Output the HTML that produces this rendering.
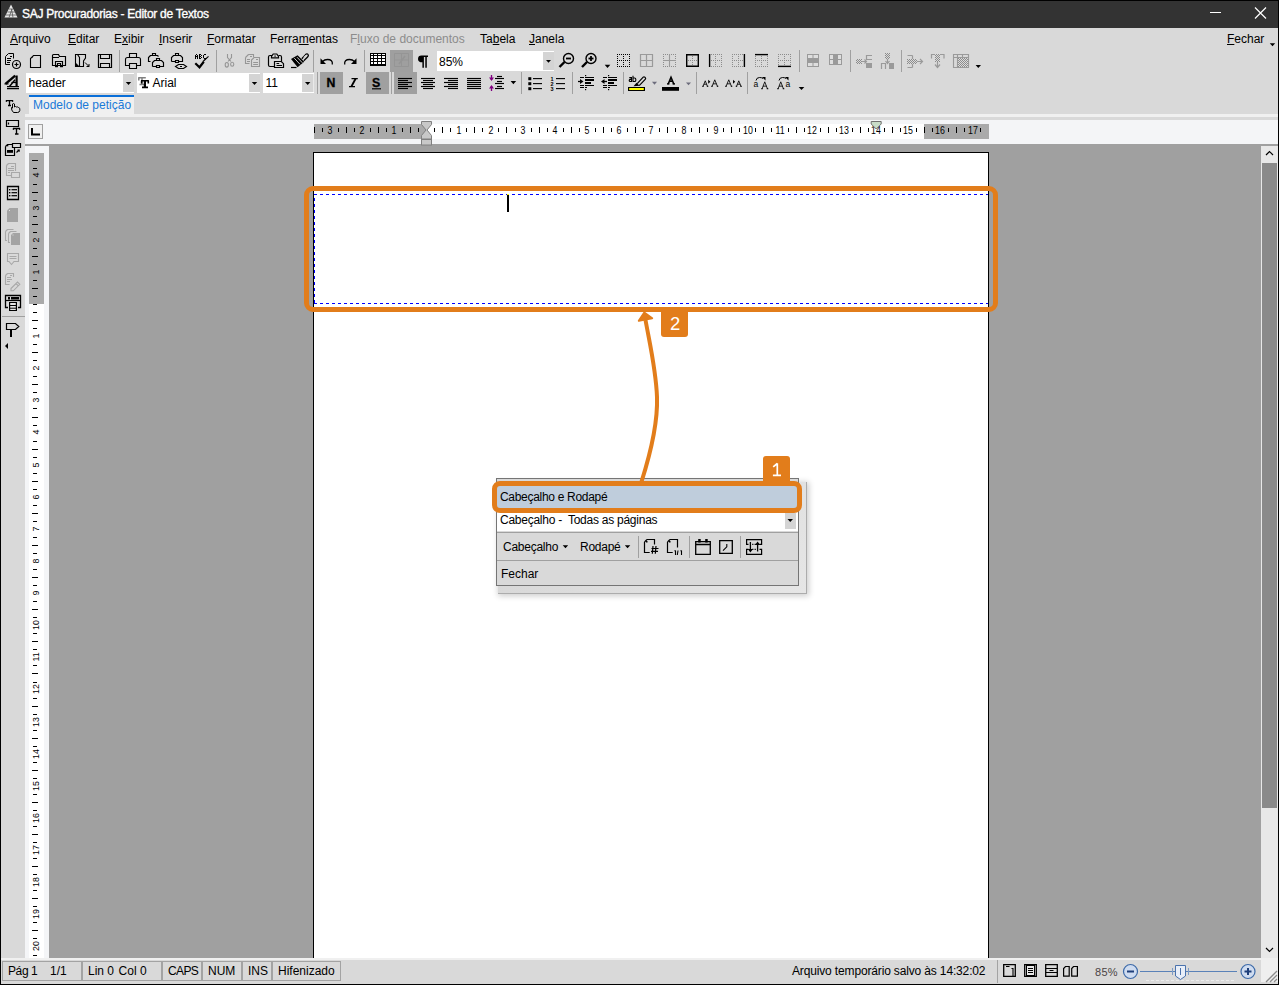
<!DOCTYPE html><html><head><meta charset="utf-8"><style>
*{margin:0;padding:0;box-sizing:border-box}
html,body{width:1279px;height:985px;overflow:hidden;background:#d9d9d9;font-family:"Liberation Sans",sans-serif;font-size:12px;color:#000}
.a{position:absolute}
.t{position:absolute;white-space:nowrap;line-height:1}
u{text-decoration:underline;text-underline-offset:1px;text-decoration-thickness:1px}
svg{position:absolute;overflow:visible}
.rn{position:absolute;font-size:10px;line-height:1;color:#000;white-space:nowrap}
.tk{position:absolute;background:#000}
.pn{position:absolute;top:961px;height:20px;border:1px solid #a3a3a3;background:#d9d9d9}
</style></head><body>

<div class="a" style="left:0;top:0;width:1279px;height:28px;background:#333333;border-top:1px solid #000"></div>
<div class="t" style="left:22px;top:8px;color:#fff;font-size:12px;letter-spacing:-0.27px;-webkit-text-stroke:0.35px #fff">SAJ Procuradorias - Editor de Textos</div>
<div class="a" style="left:1210px;top:12px;width:11px;height:1px;background:#fff"></div>
<svg style="left:0;top:0" width="1279" height="28"><path d="M1255 7.5 L1266 18.5 M1266 7.5 L1255 18.5" stroke="#fff" stroke-width="1.2"/></svg>
<svg style="left:0;top:0" width="30" height="28"><path d="M11 4.5 L17.5 17.5 L4.5 17.5 Z" fill="#e8e8e8"/><path d="M6 15 H17 M7.5 12 H15.5 M9 9 H13 M9 17.5 L12 9 M13 17.5 L11.5 9" stroke="#555" stroke-width="0.8"/></svg>
<div class="t" style="left:10px;top:33px;height:13px"><u>A</u>rquivo</div>
<div class="t" style="left:68px;top:33px;height:13px"><u>E</u>ditar</div>
<div class="t" style="left:114px;top:33px;height:13px">E<u>x</u>ibir</div>
<div class="t" style="left:159px;top:33px;height:13px"><u>I</u>nserir</div>
<div class="t" style="left:207px;top:33px;height:13px"><u>F</u>ormatar</div>
<div class="t" style="left:270px;top:33px;height:13px">Ferra<u>m</u>entas</div>
<div class="t" style="left:350px;top:33px;height:13px"><span style="color:#8c8c8c">F<u>l</u>uxo de documentos</span></div>
<div class="t" style="left:480px;top:33px;height:13px">Ta<u>b</u>ela</div>
<div class="t" style="left:529px;top:33px;height:13px"><u>J</u>anela</div>
<div class="t" style="left:1227px;top:33px;height:13px"><u>F</u>echar</div>
<svg style="left:0;top:0" width="1279" height="60"><path d="M1269.8 43.2 H1275.2 L1272.5 46.2 Z" fill="#000"/></svg>
<div class="a" style="left:25px;top:114px;width:1253px;height:3px;background:#f0f0f0"></div>
<div class="a" style="left:29px;top:95px;width:105px;height:19px;background:#f0f0f0;border-top:2px solid #0a6fd8"></div>
<div class="t" style="left:33px;top:99px;color:#1a7ad8">Modelo de petição</div>
<div class="a" style="left:25px;top:120px;width:1253px;height:24px;background:#f4f5f7"></div>
<div class="a" style="left:28px;top:124px;width:15px;height:15px;background:#f0f0f0;border:1px solid #a0a0a0"></div>
<svg style="left:0;top:0" width="60" height="150"><path d="M32 128 V134.6 H40" stroke="#000" stroke-width="2" fill="none"/></svg>
<div class="a" style="left:25px;top:144px;width:1253px;height:814px;background:#a0a0a0"></div>
<div class="a" style="left:25px;top:146px;width:24px;height:812px;background:#f4f5f7"></div>
<div class="a" style="left:29px;top:153px;width:15px;height:805px;background:#fff"></div>
<div class="a" style="left:29px;top:153px;width:15px;height:151px;background:#aaaaaa"></div>
<div class="a" style="left:314px;top:124px;width:675px;height:15px;background:#fff"></div>
<div class="a" style="left:314px;top:124px;width:112px;height:15px;background:#aaaaaa"></div>
<div class="a" style="left:924px;top:124px;width:65px;height:15px;background:#aaaaaa"></div>
<div class="tk" style="left:314px;top:127px;width:1px;height:6px"></div>
<div class="tk" style="left:322px;top:128px;width:1px;height:4px"></div>
<div class="rn" style="left:300.1px;top:126px;width:60px;text-align:center;transform:scaleX(0.88)">3</div>
<div class="tk" style="left:338px;top:128px;width:1px;height:4px"></div>
<div class="tk" style="left:346px;top:127px;width:1px;height:6px"></div>
<div class="tk" style="left:354px;top:128px;width:1px;height:4px"></div>
<div class="rn" style="left:332.3px;top:126px;width:60px;text-align:center;transform:scaleX(0.88)">2</div>
<div class="tk" style="left:370px;top:128px;width:1px;height:4px"></div>
<div class="tk" style="left:378px;top:127px;width:1px;height:6px"></div>
<div class="tk" style="left:386px;top:128px;width:1px;height:4px"></div>
<div class="rn" style="left:364.4px;top:126px;width:60px;text-align:center;transform:scaleX(0.88)">1</div>
<div class="tk" style="left:402px;top:128px;width:1px;height:4px"></div>
<div class="tk" style="left:410px;top:127px;width:1px;height:6px"></div>
<div class="tk" style="left:418px;top:128px;width:1px;height:4px"></div>
<div class="tk" style="left:434px;top:128px;width:1px;height:4px"></div>
<div class="tk" style="left:442px;top:127px;width:1px;height:6px"></div>
<div class="tk" style="left:450px;top:128px;width:1px;height:4px"></div>
<div class="rn" style="left:428.6px;top:126px;width:60px;text-align:center;transform:scaleX(0.88)">1</div>
<div class="tk" style="left:466px;top:128px;width:1px;height:4px"></div>
<div class="tk" style="left:474px;top:127px;width:1px;height:6px"></div>
<div class="tk" style="left:482px;top:128px;width:1px;height:4px"></div>
<div class="rn" style="left:460.7px;top:126px;width:60px;text-align:center;transform:scaleX(0.88)">2</div>
<div class="tk" style="left:498px;top:128px;width:1px;height:4px"></div>
<div class="tk" style="left:506px;top:127px;width:1px;height:6px"></div>
<div class="tk" style="left:515px;top:128px;width:1px;height:4px"></div>
<div class="rn" style="left:492.9px;top:126px;width:60px;text-align:center;transform:scaleX(0.88)">3</div>
<div class="tk" style="left:531px;top:128px;width:1px;height:4px"></div>
<div class="tk" style="left:539px;top:127px;width:1px;height:6px"></div>
<div class="tk" style="left:547px;top:128px;width:1px;height:4px"></div>
<div class="rn" style="left:525.0px;top:126px;width:60px;text-align:center;transform:scaleX(0.88)">4</div>
<div class="tk" style="left:563px;top:128px;width:1px;height:4px"></div>
<div class="tk" style="left:571px;top:127px;width:1px;height:6px"></div>
<div class="tk" style="left:579px;top:128px;width:1px;height:4px"></div>
<div class="rn" style="left:557.1px;top:126px;width:60px;text-align:center;transform:scaleX(0.88)">5</div>
<div class="tk" style="left:595px;top:128px;width:1px;height:4px"></div>
<div class="tk" style="left:603px;top:127px;width:1px;height:6px"></div>
<div class="tk" style="left:611px;top:128px;width:1px;height:4px"></div>
<div class="rn" style="left:589.2px;top:126px;width:60px;text-align:center;transform:scaleX(0.88)">6</div>
<div class="tk" style="left:627px;top:128px;width:1px;height:4px"></div>
<div class="tk" style="left:635px;top:127px;width:1px;height:6px"></div>
<div class="tk" style="left:643px;top:128px;width:1px;height:4px"></div>
<div class="rn" style="left:621.3px;top:126px;width:60px;text-align:center;transform:scaleX(0.88)">7</div>
<div class="tk" style="left:659px;top:128px;width:1px;height:4px"></div>
<div class="tk" style="left:667px;top:127px;width:1px;height:6px"></div>
<div class="tk" style="left:675px;top:128px;width:1px;height:4px"></div>
<div class="rn" style="left:653.5px;top:126px;width:60px;text-align:center;transform:scaleX(0.88)">8</div>
<div class="tk" style="left:691px;top:128px;width:1px;height:4px"></div>
<div class="tk" style="left:699px;top:127px;width:1px;height:6px"></div>
<div class="tk" style="left:707px;top:128px;width:1px;height:4px"></div>
<div class="rn" style="left:685.6px;top:126px;width:60px;text-align:center;transform:scaleX(0.88)">9</div>
<div class="tk" style="left:723px;top:128px;width:1px;height:4px"></div>
<div class="tk" style="left:731px;top:127px;width:1px;height:6px"></div>
<div class="tk" style="left:739px;top:128px;width:1px;height:4px"></div>
<div class="rn" style="left:717.7px;top:126px;width:60px;text-align:center;transform:scaleX(0.88)">10</div>
<div class="tk" style="left:755px;top:128px;width:1px;height:4px"></div>
<div class="tk" style="left:763px;top:127px;width:1px;height:6px"></div>
<div class="tk" style="left:771px;top:128px;width:1px;height:4px"></div>
<div class="rn" style="left:749.8px;top:126px;width:60px;text-align:center;transform:scaleX(0.88)">11</div>
<div class="tk" style="left:788px;top:128px;width:1px;height:4px"></div>
<div class="tk" style="left:796px;top:127px;width:1px;height:6px"></div>
<div class="tk" style="left:804px;top:128px;width:1px;height:4px"></div>
<div class="rn" style="left:781.9px;top:126px;width:60px;text-align:center;transform:scaleX(0.88)">12</div>
<div class="tk" style="left:820px;top:128px;width:1px;height:4px"></div>
<div class="tk" style="left:828px;top:127px;width:1px;height:6px"></div>
<div class="tk" style="left:836px;top:128px;width:1px;height:4px"></div>
<div class="rn" style="left:814.1px;top:126px;width:60px;text-align:center;transform:scaleX(0.88)">13</div>
<div class="tk" style="left:852px;top:128px;width:1px;height:4px"></div>
<div class="tk" style="left:860px;top:127px;width:1px;height:6px"></div>
<div class="tk" style="left:868px;top:128px;width:1px;height:4px"></div>
<div class="rn" style="left:846.2px;top:126px;width:60px;text-align:center;transform:scaleX(0.88)">14</div>
<div class="tk" style="left:884px;top:128px;width:1px;height:4px"></div>
<div class="tk" style="left:892px;top:127px;width:1px;height:6px"></div>
<div class="tk" style="left:900px;top:128px;width:1px;height:4px"></div>
<div class="rn" style="left:878.3px;top:126px;width:60px;text-align:center;transform:scaleX(0.88)">15</div>
<div class="tk" style="left:916px;top:128px;width:1px;height:4px"></div>
<div class="tk" style="left:924px;top:127px;width:1px;height:6px"></div>
<div class="tk" style="left:932px;top:128px;width:1px;height:4px"></div>
<div class="rn" style="left:910.4px;top:126px;width:60px;text-align:center;transform:scaleX(0.88)">16</div>
<div class="tk" style="left:948px;top:128px;width:1px;height:4px"></div>
<div class="tk" style="left:956px;top:127px;width:1px;height:6px"></div>
<div class="tk" style="left:964px;top:128px;width:1px;height:4px"></div>
<div class="rn" style="left:942.5px;top:126px;width:60px;text-align:center;transform:scaleX(0.88)">17</div>
<div class="tk" style="left:980px;top:128px;width:1px;height:4px"></div>
<svg style="left:0;top:0" width="1279" height="150"><path d="M421.5 121.5 H431.5 V124.5 L427 130 L431.5 135.5 V139 H421.5 V135.5 L426 130 L421.5 124.5 Z" fill="#c8c8c8" stroke="#808080" stroke-width="1"/><rect x="421.5" y="139.5" width="10" height="5.5" fill="#c8c8c8" stroke="#808080"/></svg>
<svg style="left:0;top:0" width="1279" height="150"><path d="M871.2 121.5 H881.2 V124 L876.2 129 L871.2 124 Z" fill="#c8dcc8" stroke="#707070" stroke-width="1"/></svg>
<div class="tk" style="left:32px;top:160px;width:6px;height:1px"></div>
<div class="tk" style="left:33px;top:168px;width:4px;height:1px"></div>
<div class="rn" style="left:5.5px;top:170.4px;width:60px;text-align:center;transform:rotate(-90deg) scale(0.88,0.9)">4</div>
<div class="tk" style="left:33px;top:184px;width:4px;height:1px"></div>
<div class="tk" style="left:32px;top:192px;width:6px;height:1px"></div>
<div class="tk" style="left:33px;top:200px;width:4px;height:1px"></div>
<div class="rn" style="left:5.5px;top:202.5px;width:60px;text-align:center;transform:rotate(-90deg) scale(0.88,0.9)">3</div>
<div class="tk" style="left:33px;top:216px;width:4px;height:1px"></div>
<div class="tk" style="left:32px;top:224px;width:6px;height:1px"></div>
<div class="tk" style="left:33px;top:232px;width:4px;height:1px"></div>
<div class="rn" style="left:5.5px;top:234.7px;width:60px;text-align:center;transform:rotate(-90deg) scale(0.88,0.9)">2</div>
<div class="tk" style="left:33px;top:248px;width:4px;height:1px"></div>
<div class="tk" style="left:32px;top:256px;width:6px;height:1px"></div>
<div class="tk" style="left:33px;top:264px;width:4px;height:1px"></div>
<div class="rn" style="left:5.5px;top:266.8px;width:60px;text-align:center;transform:rotate(-90deg) scale(0.88,0.9)">1</div>
<div class="tk" style="left:33px;top:280px;width:4px;height:1px"></div>
<div class="tk" style="left:32px;top:288px;width:6px;height:1px"></div>
<div class="tk" style="left:33px;top:296px;width:4px;height:1px"></div>
<div class="tk" style="left:33px;top:304px;width:4px;height:1px"></div>
<div class="tk" style="left:33px;top:312px;width:4px;height:1px"></div>
<div class="tk" style="left:32px;top:320px;width:6px;height:1px"></div>
<div class="tk" style="left:33px;top:328px;width:4px;height:1px"></div>
<div class="rn" style="left:5.5px;top:331.0px;width:60px;text-align:center;transform:rotate(-90deg) scale(0.88,0.9)">1</div>
<div class="tk" style="left:33px;top:344px;width:4px;height:1px"></div>
<div class="tk" style="left:32px;top:352px;width:6px;height:1px"></div>
<div class="tk" style="left:33px;top:360px;width:4px;height:1px"></div>
<div class="rn" style="left:5.5px;top:363.1px;width:60px;text-align:center;transform:rotate(-90deg) scale(0.88,0.9)">2</div>
<div class="tk" style="left:33px;top:376px;width:4px;height:1px"></div>
<div class="tk" style="left:32px;top:384px;width:6px;height:1px"></div>
<div class="tk" style="left:33px;top:392px;width:4px;height:1px"></div>
<div class="rn" style="left:5.5px;top:395.3px;width:60px;text-align:center;transform:rotate(-90deg) scale(0.88,0.9)">3</div>
<div class="tk" style="left:33px;top:408px;width:4px;height:1px"></div>
<div class="tk" style="left:32px;top:417px;width:6px;height:1px"></div>
<div class="tk" style="left:33px;top:425px;width:4px;height:1px"></div>
<div class="rn" style="left:5.5px;top:427.4px;width:60px;text-align:center;transform:rotate(-90deg) scale(0.88,0.9)">4</div>
<div class="tk" style="left:33px;top:441px;width:4px;height:1px"></div>
<div class="tk" style="left:32px;top:449px;width:6px;height:1px"></div>
<div class="tk" style="left:33px;top:457px;width:4px;height:1px"></div>
<div class="rn" style="left:5.5px;top:459.5px;width:60px;text-align:center;transform:rotate(-90deg) scale(0.88,0.9)">5</div>
<div class="tk" style="left:33px;top:473px;width:4px;height:1px"></div>
<div class="tk" style="left:32px;top:481px;width:6px;height:1px"></div>
<div class="tk" style="left:33px;top:489px;width:4px;height:1px"></div>
<div class="rn" style="left:5.5px;top:491.6px;width:60px;text-align:center;transform:rotate(-90deg) scale(0.88,0.9)">6</div>
<div class="tk" style="left:33px;top:505px;width:4px;height:1px"></div>
<div class="tk" style="left:32px;top:513px;width:6px;height:1px"></div>
<div class="tk" style="left:33px;top:521px;width:4px;height:1px"></div>
<div class="rn" style="left:5.5px;top:523.7px;width:60px;text-align:center;transform:rotate(-90deg) scale(0.88,0.9)">7</div>
<div class="tk" style="left:33px;top:537px;width:4px;height:1px"></div>
<div class="tk" style="left:32px;top:545px;width:6px;height:1px"></div>
<div class="tk" style="left:33px;top:553px;width:4px;height:1px"></div>
<div class="rn" style="left:5.5px;top:555.9px;width:60px;text-align:center;transform:rotate(-90deg) scale(0.88,0.9)">8</div>
<div class="tk" style="left:33px;top:569px;width:4px;height:1px"></div>
<div class="tk" style="left:32px;top:577px;width:6px;height:1px"></div>
<div class="tk" style="left:33px;top:585px;width:4px;height:1px"></div>
<div class="rn" style="left:5.5px;top:588.0px;width:60px;text-align:center;transform:rotate(-90deg) scale(0.88,0.9)">9</div>
<div class="tk" style="left:33px;top:601px;width:4px;height:1px"></div>
<div class="tk" style="left:32px;top:609px;width:6px;height:1px"></div>
<div class="tk" style="left:33px;top:617px;width:4px;height:1px"></div>
<div class="rn" style="left:5.5px;top:620.1px;width:60px;text-align:center;transform:rotate(-90deg) scale(0.88,0.9)">10</div>
<div class="tk" style="left:33px;top:633px;width:4px;height:1px"></div>
<div class="tk" style="left:32px;top:641px;width:6px;height:1px"></div>
<div class="tk" style="left:33px;top:649px;width:4px;height:1px"></div>
<div class="rn" style="left:5.5px;top:652.2px;width:60px;text-align:center;transform:rotate(-90deg) scale(0.88,0.9)">11</div>
<div class="tk" style="left:33px;top:665px;width:4px;height:1px"></div>
<div class="tk" style="left:32px;top:673px;width:6px;height:1px"></div>
<div class="tk" style="left:33px;top:682px;width:4px;height:1px"></div>
<div class="rn" style="left:5.5px;top:684.3px;width:60px;text-align:center;transform:rotate(-90deg) scale(0.88,0.9)">12</div>
<div class="tk" style="left:33px;top:698px;width:4px;height:1px"></div>
<div class="tk" style="left:32px;top:706px;width:6px;height:1px"></div>
<div class="tk" style="left:33px;top:714px;width:4px;height:1px"></div>
<div class="rn" style="left:5.5px;top:716.5px;width:60px;text-align:center;transform:rotate(-90deg) scale(0.88,0.9)">13</div>
<div class="tk" style="left:33px;top:730px;width:4px;height:1px"></div>
<div class="tk" style="left:32px;top:738px;width:6px;height:1px"></div>
<div class="tk" style="left:33px;top:746px;width:4px;height:1px"></div>
<div class="rn" style="left:5.5px;top:748.6px;width:60px;text-align:center;transform:rotate(-90deg) scale(0.88,0.9)">14</div>
<div class="tk" style="left:33px;top:762px;width:4px;height:1px"></div>
<div class="tk" style="left:32px;top:770px;width:6px;height:1px"></div>
<div class="tk" style="left:33px;top:778px;width:4px;height:1px"></div>
<div class="rn" style="left:5.5px;top:780.7px;width:60px;text-align:center;transform:rotate(-90deg) scale(0.88,0.9)">15</div>
<div class="tk" style="left:33px;top:794px;width:4px;height:1px"></div>
<div class="tk" style="left:32px;top:802px;width:6px;height:1px"></div>
<div class="tk" style="left:33px;top:810px;width:4px;height:1px"></div>
<div class="rn" style="left:5.5px;top:812.8px;width:60px;text-align:center;transform:rotate(-90deg) scale(0.88,0.9)">16</div>
<div class="tk" style="left:33px;top:826px;width:4px;height:1px"></div>
<div class="tk" style="left:32px;top:834px;width:6px;height:1px"></div>
<div class="tk" style="left:33px;top:842px;width:4px;height:1px"></div>
<div class="rn" style="left:5.5px;top:844.9px;width:60px;text-align:center;transform:rotate(-90deg) scale(0.88,0.9)">17</div>
<div class="tk" style="left:33px;top:858px;width:4px;height:1px"></div>
<div class="tk" style="left:32px;top:866px;width:6px;height:1px"></div>
<div class="tk" style="left:33px;top:874px;width:4px;height:1px"></div>
<div class="rn" style="left:5.5px;top:877.1px;width:60px;text-align:center;transform:rotate(-90deg) scale(0.88,0.9)">18</div>
<div class="tk" style="left:33px;top:890px;width:4px;height:1px"></div>
<div class="tk" style="left:32px;top:898px;width:6px;height:1px"></div>
<div class="tk" style="left:33px;top:906px;width:4px;height:1px"></div>
<div class="rn" style="left:5.5px;top:909.2px;width:60px;text-align:center;transform:rotate(-90deg) scale(0.88,0.9)">19</div>
<div class="tk" style="left:33px;top:922px;width:4px;height:1px"></div>
<div class="tk" style="left:32px;top:930px;width:6px;height:1px"></div>
<div class="tk" style="left:33px;top:938px;width:4px;height:1px"></div>
<div class="rn" style="left:5.5px;top:941.3px;width:60px;text-align:center;transform:rotate(-90deg) scale(0.88,0.9)">20</div>
<div class="tk" style="left:33px;top:955px;width:4px;height:1px"></div>
<div class="a" style="left:313px;top:152px;width:676px;height:806px;background:#fff;border:1px solid #000;border-bottom:none"></div>
<svg style="left:0;top:0" width="1279" height="985"><path d="M314 194.5 H988 M314 303.5 H988" stroke="#0000ff" stroke-width="1" stroke-dasharray="3 3"/><path d="M314.5 194 V304" stroke="#0000ff" stroke-width="1" stroke-dasharray="3 3" stroke-dashoffset="2"/></svg>
<div class="a" style="left:507px;top:195px;width:2px;height:17px;background:#000"></div>
<div class="a" style="left:507px;top:194px;width:2px;height:1px;background:#ffff00"></div>
<div class="a" style="left:1261px;top:146px;width:17px;height:812px;background:#e8e8e8"></div>
<div class="a" style="left:1262px;top:163px;width:15px;height:645px;background:#8a8a8a"></div>
<svg style="left:0;top:0" width="1279" height="985"><path d="M1266 155 L1269.5 151.5 L1273 155" stroke="#000" stroke-width="1.2" fill="none"/><path d="M1266 948 L1269.5 951.5 L1273 948" stroke="#000" stroke-width="1.2" fill="none"/></svg>
<div class="a" style="left:0;top:958px;width:1279px;height:2px;background:#f0f0f0"></div>
<div class="pn" style="left:2px;width:80px"><div class="t" style="left:5px;top:3px;letter-spacing:-0.4px">Pág 1</div></div>
<div class="pn" style="left:82px;width:80px"><div class="t" style="left:5px;top:3px;">Lin 0 <span style="margin-left:1.2px">Col 0</span></div></div>
<div class="pn" style="left:162px;width:40px"><div class="t" style="left:5px;top:3px;letter-spacing:-0.6px">CAPS</div></div>
<div class="pn" style="left:202px;width:40px"><div class="t" style="left:5px;top:3px;">NUM</div></div>
<div class="pn" style="left:242px;width:30px"><div class="t" style="left:5px;top:3px;">INS</div></div>
<div class="pn" style="left:272px;width:69px"><div class="t" style="left:5px;top:3px;">Hifenizado</div></div>
<div class="t" style="left:50px;top:965px">1/1</div>
<div class="t" style="left:792px;top:965px;letter-spacing:-0.15px">Arquivo temporário salvo às 14:32:02</div>
<div class="a" style="left:997px;top:960px;width:1px;height:23px;background:#a3a3a3"></div>
<div class="t" style="left:1095px;top:967px;color:#4a4444;font-size:11px;letter-spacing:0.3px">85%</div>
<svg style="left:0;top:0" width="1279" height="985"><path d="M1140 971.5 H1237" stroke="#5a82b8" stroke-width="1"/><circle cx="1130.5" cy="971.5" r="7" fill="#cfdcf0" stroke="#3d6aa8" stroke-width="1.2"/><path d="M1127 971.5 H1134" stroke="#1e3f7a" stroke-width="2"/><circle cx="1248" cy="971.5" r="7" fill="#cfdcf0" stroke="#3d6aa8" stroke-width="1.2"/><path d="M1244.5 971.5 H1251.5 M1248 968 V975" stroke="#1e3f7a" stroke-width="2"/><path d="M1175.5 965.5 H1185.5 V976 L1180.5 979.5 L1175.5 976 Z" fill="#e8eef8" stroke="#4a72ad" stroke-width="1"/><path d="M1180.5 968 V975" stroke="#4a72ad"/><path d="M1172.5 968 V975 M1188.5 968 V975" stroke="#7f9cc6" stroke-width="1"/><path d="M1146 980.5 H1234" stroke="#ececec" stroke-width="1" stroke-dasharray="3 2"/><path d="M1003.7 964.7 H1015.3 V976.3 H1003.7 Z" stroke="#000" stroke-width="1.3" fill="none"/><path d="M1006 966.5 H1009.5 M1011.5 968.5 H1013 V976" stroke="#000" stroke-width="1.1" fill="none"/><path d="M1024.7 964.7 H1036.3 V976.3 H1024.7 Z" stroke="#000" stroke-width="1.3" fill="none"/><rect x="1026" y="965" width="9" height="11" fill="#000"/><rect x="1027" y="966" width="7" height="9" fill="#e8e8e8"/><path d="M1028 968.5 H1033 M1028 970.5 H1033 M1028 972.5 H1033" stroke="#000" stroke-width="1"/><path d="M1045.7 964.7 H1057.3 V976.3 H1045.7 Z" stroke="#000" stroke-width="1.3" fill="none"/><path d="M1046 968.5 H1057 M1046 972.5 H1057" stroke="#000" stroke-width="1.2"/><path d="M1049.5 970.5 H1053.5" stroke="#000" stroke-width="1"/><path d="M1065.5 966.5 H1069.2 V976.2 H1063.6 V968.5 Z M1073.5 966.5 H1077.4 V976.2 H1071.7 V968.5 Z" stroke="#000" stroke-width="1.2" fill="none"/></svg>
<div class="a" style="left:1261px;top:958px;width:17px;height:24px;background:#efefef"></div>
<svg style="left:0;top:0" width="1279" height="985"><path d="M1266 982 L1277 971 M1270 982 L1277 975 M1274 982 L1277 979" stroke="#8c8c8c" stroke-width="1.3"/></svg>
<svg style="left:0;top:0" width="1279" height="360" shape-rendering="auto"><defs><pattern id="chk" width="2" height="2" patternUnits="userSpaceOnUse"><rect width="2" height="2" fill="#dadada"/><rect width="1" height="1" fill="#8c8c8c"/><rect x="1" y="1" width="1" height="1" fill="#8c8c8c"/></pattern></defs><path d="M8.5 53.5 H13.5 V58.5 M5.5 56.5 L8.5 53.5 M5.5 56.5 V64.5 H10" stroke="#000" stroke-width="1" fill="none" /><path d="M7 58.5 H11 M7 60.5 H11 M7 62.5 H10 M10 56.5 H12" stroke="#000" stroke-width="1" fill="none" /><circle cx="16.5" cy="64.5" r="4" stroke="#000" stroke-width="1.2" fill="#d9d9d9"/><path d="M14.5 64.5 H18.5 M16.5 62.5 V66.5" stroke="#000" stroke-width="1.2" fill="none" /><path d="M33.5 55.5 H40.5 V67.5 H30.5 V58.5 Z" stroke="#000" stroke-width="1.1" fill="none" /><rect x="31.5" y="57" width="1" height="1" fill="#000"/><path d="M52.5 65.5 V55.5 Q52.5 54.5 53.5 54.5 H58.5 L59.5 56.5 H65.5 V65.5 Z M52.5 57.5 H59" stroke="#000" stroke-width="1.15" fill="none" /><path d="M55.5 66.5 V61.5 H62.5 V66.5 M57.5 66 V63.5 H60.5 V66" stroke="#000" stroke-width="1.15" fill="none" /><rect x="55" y="66" width="3" height="1.2" fill="#000"/><rect x="60" y="66" width="3" height="1.2" fill="#000"/><path d="M75.5 54.5 H85.5 V58 L83.5 61 V66.5 H75.5 Z M77.5 54.5 L79.5 57.5 V66.5" stroke="#000" stroke-width="1.1" fill="none" /><path d="M76 63 L79 66 H76 Z" fill="#000"/><path d="M85 62.5 L89 66.5 M89 64 V66.5 H86.5" stroke="#000" stroke-width="1" fill="none" /><path d="M98.5 54.5 H111.5 V67.5 H98.5 Z" stroke="#000" stroke-width="1.2" fill="none" /><path d="M100.5 55 V58.5 H109.5 V55 M100.5 67 V63.5 H109.5 V67" stroke="#000" stroke-width="1.1" fill="none" /><rect x="119" y="50" width="1" height="22" fill="#a0a0a0"/><path d="M129.5 57.5 V53.5 H136.5 V57.5" stroke="#000" stroke-width="1.1" fill="none" /><path d="M129.5 65.5 H125.5 V59.5 Q125.5 57.5 127.5 57.5 H138.5 Q140.5 57.5 140.5 59.5 V65.5 H136.5" stroke="#000" stroke-width="1.1" fill="none" /><path d="M129.5 63.5 H136.5 V68.5 H129.5 Z" stroke="#000" stroke-width="1.1" fill="none" /><path d="M152.5 55.5 V53.5 H155.5 V55.5" stroke="#000" stroke-width="1.15" fill="none" /><path d="M150.5 55.5 H157.5 L158.5 56.5 M150.5 55.5 L148.5 57.5 V61.5 H150.5" stroke="#000" stroke-width="1.15" fill="none" /><path d="M156.5 60.5 V58.5 H159.5 V60.5" stroke="#000" stroke-width="1.15" fill="none" /><path d="M152.5 66.5 V62.5 L154.5 60.5 H161.5 L163.5 62.5 V66.5 H160 M152.5 66.5 H156" stroke="#000" stroke-width="1.15" fill="none" /><path d="M156.5 67.5 V65.5 H159.5 V67.5 Z" stroke="#000" stroke-width="1.15" fill="none" /><path d="M175.5 55.5 V53.5 H178.5 V55.5" stroke="#000" stroke-width="1.15" fill="none" /><path d="M171.5 61.5 V57.5 L173.5 55.5 H180.5 L182.5 57.5 V61.5 H179 M171.5 61.5 H175" stroke="#000" stroke-width="1.15" fill="none" /><path d="M175.5 62.5 V60.5 H178.5 V62.5 Z" stroke="#000" stroke-width="1.15" fill="none" /><path d="M178.5 64.5 H183.5 L186.5 66.5 L183.5 68.5 H178.5 L175.5 66.5 Z" stroke="#000" stroke-width="1.15" fill="none" /><rect x="180" y="66" width="2" height="1" fill="#000"/><rect x="196" y="54" width="1" height="1" fill="#000"/><rect x="195" y="55" width="1" height="4" fill="#000"/><rect x="197" y="55" width="1" height="4" fill="#000"/><rect x="195" y="56" width="3" height="1" fill="#000"/><rect x="199" y="54" width="2" height="1" fill="#000"/><rect x="199" y="54" width="1" height="5" fill="#000"/><rect x="201" y="55" width="1" height="1" fill="#000"/><rect x="199" y="56" width="2" height="1" fill="#000"/><rect x="201" y="57" width="1" height="1" fill="#000"/><rect x="199" y="58" width="2" height="1" fill="#000"/><rect x="204" y="54" width="2" height="1" fill="#000"/><rect x="203" y="55" width="1" height="3" fill="#000"/><rect x="204" y="58" width="1" height="1" fill="#000"/><path d="M195.3 63.3 L199.5 67.3 L203.8 61.8" stroke="#000" stroke-width="2.2" fill="none" /><path d="M203 61.5 L208.5 56.3" stroke="#000" stroke-width="1.1" fill="none" /><path d="M203.5 58 L207 58 L205 60 Z" fill="#000"/><rect x="216" y="50" width="1" height="22" fill="#a0a0a0"/><path d="M227.5 54 V57.5 L231 61.5 M231.5 54 V57.5 L228 61.5" stroke="#969696" stroke-width="1.1" fill="none" /><ellipse cx="226.8" cy="64.8" rx="1.6" ry="2.3" stroke="#969696" stroke-width="1.1" fill="none"/><ellipse cx="232.2" cy="64.3" rx="1.6" ry="2" stroke="#969696" stroke-width="1.1" fill="none"/><path d="M248.5 54.5 H253.5 V57 M245.5 57.5 L248.5 54.5 M245.5 57.5 V63.5 H249.5" stroke="#969696" stroke-width="1.1" fill="none" /><path d="M247 59.5 H250 M247 61.5 H250 M250 56.5 H252" stroke="#969696" stroke-width="1" fill="none" /><path d="M254 57.5 H259.5 V66.5 H251.5 V60 Z" stroke="#969696" stroke-width="1.1" fill="none" /><path d="M253.2 62.5 H258 M253.2 64.5 H258 M256 59.5 H258" stroke="#969696" stroke-width="1" fill="none" /><path d="M272 55.5 H270 Q268.5 55.5 268.5 57 V65 Q268.5 66.5 270 66.5 H274.5" stroke="#000" stroke-width="1.2" fill="none" /><path d="M278.5 55.5 H280 Q281.5 55.5 281.5 57 V61.5" stroke="#000" stroke-width="1.2" fill="none" /><path d="M271.5 57.8 H278.5 V56.5 L276.8 54 H273.2 L271.5 56.5 Z" stroke="#000" stroke-width="1.2" fill="none" /><rect x="274.3" y="55.6" width="1.6" height="1" fill="#000"/><path d="M274.5 61.5 H281.3 L283.5 63.7 V67.5 H274.5 Z" stroke="#000" stroke-width="1.2" fill="none" /><path d="M276.5 63.5 H279.2 M276.5 65.5 H282" stroke="#000" stroke-width="1.1" fill="none" /><path d="M291 59 L297.6 55.2 L304.2 61.8 L297.6 67.2 Z" fill="#000"/><path d="M294.3 58.2 L300 64.3 M297 57.2 L302.4 62.8" stroke="#e8e8e8" stroke-width="0.9" fill="none" /><path d="M301.8 58.8 L305.6 54.6 Q307 53.3 308 54.4 Q309 55.6 307.6 57 L303.8 60.8" stroke="#000" stroke-width="1.3" fill="none" /><path d="M303.5 57.3 L306.3 54.9" stroke="#e8e8e8" stroke-width="0.8" fill="none" /><path d="M291 67.5 H296.5" stroke="#000" stroke-width="1.2" fill="none" /><rect x="313" y="50" width="1" height="22" fill="#a0a0a0"/><path d="M332.3 64.5 Q333 59.5 327.5 59.5 Q324.5 59.5 322.5 61.5" stroke="#000" stroke-width="1.3" fill="none" /><path d="M320.5 58.3 V64 H326 Z" fill="#000"/><path d="M344.7 64.5 Q344 59.5 349.5 59.5 Q352.5 59.5 354.5 61.5" stroke="#000" stroke-width="1.3" fill="none" /><path d="M356.5 58.3 V64 H351 Z" fill="#000"/><rect x="364" y="50" width="1" height="22" fill="#a0a0a0"/><rect x="370" y="53" width="16" height="13" fill="#000"/><rect x="371" y="54" width="2" height="1" fill="#fff"/><rect x="371" y="56" width="2" height="2" fill="#fff"/><rect x="371" y="59" width="2" height="2" fill="#fff"/><rect x="371" y="62" width="2" height="2" fill="#fff"/><rect x="374" y="54" width="3" height="1" fill="#fff"/><rect x="374" y="56" width="3" height="2" fill="#fff"/><rect x="374" y="59" width="3" height="2" fill="#fff"/><rect x="374" y="62" width="3" height="2" fill="#fff"/><rect x="378" y="54" width="3" height="1" fill="#fff"/><rect x="378" y="56" width="3" height="2" fill="#fff"/><rect x="378" y="59" width="3" height="2" fill="#fff"/><rect x="378" y="62" width="3" height="2" fill="#fff"/><rect x="382" y="54" width="3" height="1" fill="#fff"/><rect x="382" y="56" width="3" height="2" fill="#fff"/><rect x="382" y="59" width="3" height="2" fill="#fff"/><rect x="382" y="62" width="3" height="2" fill="#fff"/><rect x="390" y="50" width="23" height="22" fill="#9f9f9f"/><path d="M394.5 53.5 H408.5 V66.5 H394.5 Z M401.5 53.5 V66.5 M394.5 60 H408.5" stroke="#959595" stroke-width="1" fill="none" /><path d="M399 64 L405 56" stroke="#959595" stroke-width="1.5" fill="none" /><path d="M421.5 55.5 H428 V57 H426.8 V67.8 H425.3 V57 H423.9 V67.8 H422.4 V62.3 Q418 62.3 418 58.9 Q418 55.5 421.5 55.5 Z" fill="#000"/><rect x="437" y="51" width="117" height="20" fill="#fff"/><rect x="543" y="52" width="11" height="18" fill="#d4d4d4"/><path d="M546 60 H551 L548.5 62.8 Z" fill="#000"/><text x="439" y="65.5" font-family="Liberation Sans" font-size="12" font-weight="normal" font-style="normal" fill="#000">85%</text><circle cx="568.5" cy="58.5" r="5" stroke="#000" stroke-width="1.4" fill="none"/><path d="M566.0 58.5 H571.0" stroke="#000" stroke-width="1.8" fill="none" /><path d="M559.5 67 L564.5 62" stroke="#000" stroke-width="2.4" fill="none" /><circle cx="591" cy="58.5" r="5" stroke="#000" stroke-width="1.4" fill="none"/><path d="M588.5 58.5 H593.5" stroke="#000" stroke-width="1.8" fill="none" /><path d="M591 56 V61" stroke="#000" stroke-width="1.8" fill="none" /><path d="M582 67 L587 62" stroke="#000" stroke-width="2.4" fill="none" /><path d="M604.7 64.8 H610.3 L607.5 68 Z" fill="#000"/><rect x="617" y="54" width="1" height="1" fill="#000"/><rect x="617" y="56" width="1" height="1" fill="#000"/><rect x="617" y="58" width="1" height="1" fill="#000"/><rect x="617" y="60" width="1" height="1" fill="#000"/><rect x="617" y="62" width="1" height="1" fill="#000"/><rect x="617" y="64" width="1" height="1" fill="#000"/><rect x="617" y="66" width="1" height="1" fill="#000"/><rect x="619" y="54" width="1" height="1" fill="#000"/><rect x="619" y="60" width="1" height="1" fill="#000"/><rect x="619" y="66" width="1" height="1" fill="#000"/><rect x="621" y="54" width="1" height="1" fill="#000"/><rect x="621" y="60" width="1" height="1" fill="#000"/><rect x="621" y="66" width="1" height="1" fill="#000"/><rect x="623" y="54" width="1" height="1" fill="#000"/><rect x="623" y="56" width="1" height="1" fill="#000"/><rect x="623" y="58" width="1" height="1" fill="#000"/><rect x="623" y="60" width="1" height="1" fill="#000"/><rect x="623" y="62" width="1" height="1" fill="#000"/><rect x="623" y="64" width="1" height="1" fill="#000"/><rect x="623" y="66" width="1" height="1" fill="#000"/><rect x="625" y="54" width="1" height="1" fill="#000"/><rect x="625" y="60" width="1" height="1" fill="#000"/><rect x="625" y="66" width="1" height="1" fill="#000"/><rect x="627" y="54" width="1" height="1" fill="#000"/><rect x="627" y="60" width="1" height="1" fill="#000"/><rect x="627" y="66" width="1" height="1" fill="#000"/><rect x="629" y="54" width="1" height="1" fill="#000"/><rect x="629" y="56" width="1" height="1" fill="#000"/><rect x="629" y="58" width="1" height="1" fill="#000"/><rect x="629" y="60" width="1" height="1" fill="#000"/><rect x="629" y="62" width="1" height="1" fill="#000"/><rect x="629" y="64" width="1" height="1" fill="#000"/><rect x="629" y="66" width="1" height="1" fill="#000"/><path d="M640.5 54.5 H652.5 V66.5 H640.5 Z M646.5 54.5 V66.5 M640.5 60.5 H652.5" stroke="#9a9a9a" stroke-width="1.2" fill="none" /><rect x="663" y="54" width="1" height="1" fill="#8c8c8c"/><rect x="663" y="56" width="1" height="1" fill="#8c8c8c"/><rect x="663" y="58" width="1" height="1" fill="#8c8c8c"/><rect x="663" y="60" width="1" height="1" fill="#8c8c8c"/><rect x="663" y="62" width="1" height="1" fill="#8c8c8c"/><rect x="663" y="64" width="1" height="1" fill="#8c8c8c"/><rect x="663" y="66" width="1" height="1" fill="#8c8c8c"/><rect x="665" y="54" width="1" height="1" fill="#8c8c8c"/><rect x="665" y="66" width="1" height="1" fill="#8c8c8c"/><rect x="667" y="54" width="1" height="1" fill="#8c8c8c"/><rect x="667" y="66" width="1" height="1" fill="#8c8c8c"/><rect x="669" y="54" width="1" height="1" fill="#8c8c8c"/><rect x="669" y="66" width="1" height="1" fill="#8c8c8c"/><rect x="671" y="54" width="1" height="1" fill="#8c8c8c"/><rect x="671" y="66" width="1" height="1" fill="#8c8c8c"/><rect x="673" y="54" width="1" height="1" fill="#8c8c8c"/><rect x="673" y="66" width="1" height="1" fill="#8c8c8c"/><rect x="675" y="54" width="1" height="1" fill="#8c8c8c"/><rect x="675" y="56" width="1" height="1" fill="#8c8c8c"/><rect x="675" y="58" width="1" height="1" fill="#8c8c8c"/><rect x="675" y="60" width="1" height="1" fill="#8c8c8c"/><rect x="675" y="62" width="1" height="1" fill="#8c8c8c"/><rect x="675" y="64" width="1" height="1" fill="#8c8c8c"/><rect x="675" y="66" width="1" height="1" fill="#8c8c8c"/><path d="M669.5 54 V67 M663 60.5 H676" stroke="#9a9a9a" stroke-width="1.1" fill="none" /><rect x="686" y="60" width="1" height="1" fill="#8c8c8c"/><rect x="688" y="60" width="1" height="1" fill="#8c8c8c"/><rect x="690" y="60" width="1" height="1" fill="#8c8c8c"/><rect x="692" y="54" width="1" height="1" fill="#8c8c8c"/><rect x="692" y="56" width="1" height="1" fill="#8c8c8c"/><rect x="692" y="58" width="1" height="1" fill="#8c8c8c"/><rect x="692" y="60" width="1" height="1" fill="#8c8c8c"/><rect x="692" y="62" width="1" height="1" fill="#8c8c8c"/><rect x="692" y="64" width="1" height="1" fill="#8c8c8c"/><rect x="692" y="66" width="1" height="1" fill="#8c8c8c"/><rect x="694" y="60" width="1" height="1" fill="#8c8c8c"/><rect x="696" y="60" width="1" height="1" fill="#8c8c8c"/><rect x="698" y="60" width="1" height="1" fill="#8c8c8c"/><path d="M686.7 54.7 H698.3 V66.3 H686.7 Z" stroke="#000" stroke-width="1.4" fill="none" /><rect x="709" y="54" width="1" height="1" fill="#8c8c8c"/><rect x="709" y="56" width="1" height="1" fill="#8c8c8c"/><rect x="709" y="58" width="1" height="1" fill="#8c8c8c"/><rect x="709" y="60" width="1" height="1" fill="#8c8c8c"/><rect x="709" y="62" width="1" height="1" fill="#8c8c8c"/><rect x="709" y="64" width="1" height="1" fill="#8c8c8c"/><rect x="709" y="66" width="1" height="1" fill="#8c8c8c"/><rect x="711" y="54" width="1" height="1" fill="#8c8c8c"/><rect x="711" y="60" width="1" height="1" fill="#8c8c8c"/><rect x="711" y="66" width="1" height="1" fill="#8c8c8c"/><rect x="713" y="54" width="1" height="1" fill="#8c8c8c"/><rect x="713" y="60" width="1" height="1" fill="#8c8c8c"/><rect x="713" y="66" width="1" height="1" fill="#8c8c8c"/><rect x="715" y="54" width="1" height="1" fill="#8c8c8c"/><rect x="715" y="56" width="1" height="1" fill="#8c8c8c"/><rect x="715" y="58" width="1" height="1" fill="#8c8c8c"/><rect x="715" y="60" width="1" height="1" fill="#8c8c8c"/><rect x="715" y="62" width="1" height="1" fill="#8c8c8c"/><rect x="715" y="64" width="1" height="1" fill="#8c8c8c"/><rect x="715" y="66" width="1" height="1" fill="#8c8c8c"/><rect x="717" y="54" width="1" height="1" fill="#8c8c8c"/><rect x="717" y="60" width="1" height="1" fill="#8c8c8c"/><rect x="717" y="66" width="1" height="1" fill="#8c8c8c"/><rect x="719" y="54" width="1" height="1" fill="#8c8c8c"/><rect x="719" y="60" width="1" height="1" fill="#8c8c8c"/><rect x="719" y="66" width="1" height="1" fill="#8c8c8c"/><rect x="721" y="54" width="1" height="1" fill="#8c8c8c"/><rect x="721" y="56" width="1" height="1" fill="#8c8c8c"/><rect x="721" y="58" width="1" height="1" fill="#8c8c8c"/><rect x="721" y="60" width="1" height="1" fill="#8c8c8c"/><rect x="721" y="62" width="1" height="1" fill="#8c8c8c"/><rect x="721" y="64" width="1" height="1" fill="#8c8c8c"/><rect x="721" y="66" width="1" height="1" fill="#8c8c8c"/><path d="M709.6 54 V67" stroke="#000" stroke-width="1.4" fill="none" /><rect x="732" y="54" width="1" height="1" fill="#8c8c8c"/><rect x="732" y="56" width="1" height="1" fill="#8c8c8c"/><rect x="732" y="58" width="1" height="1" fill="#8c8c8c"/><rect x="732" y="60" width="1" height="1" fill="#8c8c8c"/><rect x="732" y="62" width="1" height="1" fill="#8c8c8c"/><rect x="732" y="64" width="1" height="1" fill="#8c8c8c"/><rect x="732" y="66" width="1" height="1" fill="#8c8c8c"/><rect x="734" y="54" width="1" height="1" fill="#8c8c8c"/><rect x="734" y="60" width="1" height="1" fill="#8c8c8c"/><rect x="734" y="66" width="1" height="1" fill="#8c8c8c"/><rect x="736" y="54" width="1" height="1" fill="#8c8c8c"/><rect x="736" y="60" width="1" height="1" fill="#8c8c8c"/><rect x="736" y="66" width="1" height="1" fill="#8c8c8c"/><rect x="738" y="54" width="1" height="1" fill="#8c8c8c"/><rect x="738" y="56" width="1" height="1" fill="#8c8c8c"/><rect x="738" y="58" width="1" height="1" fill="#8c8c8c"/><rect x="738" y="60" width="1" height="1" fill="#8c8c8c"/><rect x="738" y="62" width="1" height="1" fill="#8c8c8c"/><rect x="738" y="64" width="1" height="1" fill="#8c8c8c"/><rect x="738" y="66" width="1" height="1" fill="#8c8c8c"/><rect x="740" y="54" width="1" height="1" fill="#8c8c8c"/><rect x="740" y="60" width="1" height="1" fill="#8c8c8c"/><rect x="740" y="66" width="1" height="1" fill="#8c8c8c"/><rect x="742" y="54" width="1" height="1" fill="#8c8c8c"/><rect x="742" y="60" width="1" height="1" fill="#8c8c8c"/><rect x="742" y="66" width="1" height="1" fill="#8c8c8c"/><rect x="744" y="54" width="1" height="1" fill="#8c8c8c"/><rect x="744" y="56" width="1" height="1" fill="#8c8c8c"/><rect x="744" y="58" width="1" height="1" fill="#8c8c8c"/><rect x="744" y="60" width="1" height="1" fill="#8c8c8c"/><rect x="744" y="62" width="1" height="1" fill="#8c8c8c"/><rect x="744" y="64" width="1" height="1" fill="#8c8c8c"/><rect x="744" y="66" width="1" height="1" fill="#8c8c8c"/><path d="M744.4 54 V67" stroke="#000" stroke-width="1.4" fill="none" /><rect x="755" y="54" width="1" height="1" fill="#8c8c8c"/><rect x="755" y="56" width="1" height="1" fill="#8c8c8c"/><rect x="755" y="58" width="1" height="1" fill="#8c8c8c"/><rect x="755" y="60" width="1" height="1" fill="#8c8c8c"/><rect x="755" y="62" width="1" height="1" fill="#8c8c8c"/><rect x="755" y="64" width="1" height="1" fill="#8c8c8c"/><rect x="755" y="66" width="1" height="1" fill="#8c8c8c"/><rect x="757" y="54" width="1" height="1" fill="#8c8c8c"/><rect x="757" y="60" width="1" height="1" fill="#8c8c8c"/><rect x="757" y="66" width="1" height="1" fill="#8c8c8c"/><rect x="759" y="54" width="1" height="1" fill="#8c8c8c"/><rect x="759" y="60" width="1" height="1" fill="#8c8c8c"/><rect x="759" y="66" width="1" height="1" fill="#8c8c8c"/><rect x="761" y="54" width="1" height="1" fill="#8c8c8c"/><rect x="761" y="56" width="1" height="1" fill="#8c8c8c"/><rect x="761" y="58" width="1" height="1" fill="#8c8c8c"/><rect x="761" y="60" width="1" height="1" fill="#8c8c8c"/><rect x="761" y="62" width="1" height="1" fill="#8c8c8c"/><rect x="761" y="64" width="1" height="1" fill="#8c8c8c"/><rect x="761" y="66" width="1" height="1" fill="#8c8c8c"/><rect x="763" y="54" width="1" height="1" fill="#8c8c8c"/><rect x="763" y="60" width="1" height="1" fill="#8c8c8c"/><rect x="763" y="66" width="1" height="1" fill="#8c8c8c"/><rect x="765" y="54" width="1" height="1" fill="#8c8c8c"/><rect x="765" y="60" width="1" height="1" fill="#8c8c8c"/><rect x="765" y="66" width="1" height="1" fill="#8c8c8c"/><rect x="767" y="54" width="1" height="1" fill="#8c8c8c"/><rect x="767" y="56" width="1" height="1" fill="#8c8c8c"/><rect x="767" y="58" width="1" height="1" fill="#8c8c8c"/><rect x="767" y="60" width="1" height="1" fill="#8c8c8c"/><rect x="767" y="62" width="1" height="1" fill="#8c8c8c"/><rect x="767" y="64" width="1" height="1" fill="#8c8c8c"/><rect x="767" y="66" width="1" height="1" fill="#8c8c8c"/><path d="M755 54.6 H768" stroke="#000" stroke-width="1.4" fill="none" /><rect x="778" y="54" width="1" height="1" fill="#8c8c8c"/><rect x="778" y="56" width="1" height="1" fill="#8c8c8c"/><rect x="778" y="58" width="1" height="1" fill="#8c8c8c"/><rect x="778" y="60" width="1" height="1" fill="#8c8c8c"/><rect x="778" y="62" width="1" height="1" fill="#8c8c8c"/><rect x="778" y="64" width="1" height="1" fill="#8c8c8c"/><rect x="778" y="66" width="1" height="1" fill="#8c8c8c"/><rect x="780" y="54" width="1" height="1" fill="#8c8c8c"/><rect x="780" y="60" width="1" height="1" fill="#8c8c8c"/><rect x="780" y="66" width="1" height="1" fill="#8c8c8c"/><rect x="782" y="54" width="1" height="1" fill="#8c8c8c"/><rect x="782" y="60" width="1" height="1" fill="#8c8c8c"/><rect x="782" y="66" width="1" height="1" fill="#8c8c8c"/><rect x="784" y="54" width="1" height="1" fill="#8c8c8c"/><rect x="784" y="56" width="1" height="1" fill="#8c8c8c"/><rect x="784" y="58" width="1" height="1" fill="#8c8c8c"/><rect x="784" y="60" width="1" height="1" fill="#8c8c8c"/><rect x="784" y="62" width="1" height="1" fill="#8c8c8c"/><rect x="784" y="64" width="1" height="1" fill="#8c8c8c"/><rect x="784" y="66" width="1" height="1" fill="#8c8c8c"/><rect x="786" y="54" width="1" height="1" fill="#8c8c8c"/><rect x="786" y="60" width="1" height="1" fill="#8c8c8c"/><rect x="786" y="66" width="1" height="1" fill="#8c8c8c"/><rect x="788" y="54" width="1" height="1" fill="#8c8c8c"/><rect x="788" y="60" width="1" height="1" fill="#8c8c8c"/><rect x="788" y="66" width="1" height="1" fill="#8c8c8c"/><rect x="790" y="54" width="1" height="1" fill="#8c8c8c"/><rect x="790" y="56" width="1" height="1" fill="#8c8c8c"/><rect x="790" y="58" width="1" height="1" fill="#8c8c8c"/><rect x="790" y="60" width="1" height="1" fill="#8c8c8c"/><rect x="790" y="62" width="1" height="1" fill="#8c8c8c"/><rect x="790" y="64" width="1" height="1" fill="#8c8c8c"/><rect x="790" y="66" width="1" height="1" fill="#8c8c8c"/><path d="M778 66.4 H791" stroke="#000" stroke-width="1.4" fill="none" /><rect x="799" y="50" width="1" height="22" fill="#a0a0a0"/><rect x="807" y="54" width="12" height="13" fill="#9a9a9a"/><rect x="808" y="55" width="4.5" height="3" fill="#dedede"/><rect x="813.5" y="55" width="4.5" height="3" fill="#dedede"/><rect x="808" y="63" width="4.5" height="3" fill="#dedede"/><rect x="813.5" y="63" width="4.5" height="3" fill="#dedede"/><rect x="829" y="54" width="13" height="11" fill="#9a9a9a"/><rect x="830" y="55" width="3" height="4" fill="#dedede"/><rect x="838" y="55" width="3" height="4" fill="#dedede"/><rect x="830" y="60" width="3" height="4" fill="#dedede"/><rect x="838" y="60" width="3" height="4" fill="#dedede"/><rect x="850" y="50" width="1" height="22" fill="#a0a0a0"/><rect x="856" y="59" width="6" height="5" fill="url(#chk)"/><path d="M862 61.5 H866 M864.5 59.5 L866.5 61.5 L864.5 63.5" stroke="#9a9a9a" stroke-width="1.2" fill="none" /><path d="M872 55.5 H866.5 V59.5 H872" stroke="#9a9a9a" stroke-width="1.2" fill="none" /><rect x="866" y="63" width="6" height="5" fill="#9a9a9a"/><rect x="885" y="53" width="5" height="6" fill="url(#chk)"/><path d="M887.5 59 V63 M885.5 61 L887.5 63.5 L889.5 61" stroke="#9a9a9a" stroke-width="1.2" fill="none" /><path d="M881.5 69 V63.5 H885.5 V69" stroke="#9a9a9a" stroke-width="1.2" fill="none" /><rect x="889" y="63" width="5" height="6" fill="#9a9a9a"/><rect x="901" y="50" width="1" height="22" fill="#a0a0a0"/><path d="M907.5 55.5 H912.5 M907.5 67.5 H912.5 M912.5 55.5 V67.5" stroke="#9a9a9a" stroke-width="1.2" fill="none" /><rect x="907" y="59" width="10" height="5" fill="url(#chk)"/><path d="M917 61.5 H922 M920 59 L922.5 61.5 L920 64" stroke="#9a9a9a" stroke-width="1.2" fill="none" /><path d="M931.5 58.5 V54 M931.5 54.5 H944 M944 54 V58.5" stroke="#9a9a9a" stroke-width="1.2" fill="none" /><rect x="935" y="54" width="5" height="8" fill="url(#chk)"/><path d="M937.5 62 V67 M935 64.5 L937.5 67.5 L940 64.5" stroke="#9a9a9a" stroke-width="1.2" fill="none" /><path d="M953.5 54.5 H968.5 V67.5 H953.5 Z M957.5 54.5 V67.5 M953.5 57.5 H968.5 M962.5 54.5 V57.5" stroke="#9a9a9a" stroke-width="1.1" fill="none" /><rect x="958" y="58" width="10" height="9" fill="url(#chk)"/><path d="M975.6 65 H981 L978.3 68 Z" fill="#000"/><path d="M5.5 83.8 L15.2 75.6" stroke="#000" stroke-width="2.4" fill="none" /><path d="M16.6 75.5 V86.5" stroke="#000" stroke-width="2.2" fill="none" /><path d="M9.5 86.5 L15 79.8" stroke="#000" stroke-width="1.4" fill="none" /><path d="M11.5 82.5 H16" stroke="#000" stroke-width="1.2" fill="none" /><path d="M7 86.6 H19 M7 88.7 H19 M4.5 83.9 H8.5" stroke="#000" stroke-width="1.2" fill="none" /><rect x="26" y="73" width="108" height="20" fill="#fff"/><rect x="123" y="74" width="11" height="18" fill="#d4d4d4"/><path d="M125.8 82 H131.2 L128.5 85 Z" fill="#000"/><rect x="137" y="73" width="123" height="20" fill="#fff"/><rect x="249" y="74" width="11" height="18" fill="#d4d4d4"/><path d="M251.8 82 H257.2 L254.5 85 Z" fill="#000"/><rect x="263" y="73" width="51" height="20" fill="#fff"/><rect x="302" y="74" width="11.5" height="18" fill="#d4d4d4"/><path d="M305 82 H310.4 L307.7 85 Z" fill="#000"/><text x="28.5" y="87" font-family="Liberation Sans" font-size="12" font-weight="normal" font-style="normal" fill="#000">header</text><text x="152.5" y="87" font-family="Liberation Sans" font-size="12" font-weight="normal" font-style="normal" fill="#000">Arial</text><text x="265.5" y="87" font-family="Liberation Sans" font-size="12" font-weight="normal" font-style="normal" fill="#000">11</text><path d="M138.3 77.8 H145.8 M138.8 77.5 V80.5 M142 77.5 V84.5 M139.5 84.5 H144" stroke="#808080" stroke-width="1.5" fill="none" /><path d="M141 80.8 H148.8 M141.6 80.5 V83.6 M148.3 80.5 V83.6 M142 87.4 H148" stroke="#000" stroke-width="1.6" fill="none" /><path d="M144.9 80.5 V87.5" stroke="#000" stroke-width="2.2" fill="none" /><rect x="317" y="72" width="1" height="22" fill="#a0a0a0"/><rect x="320" y="72" width="23" height="22" fill="#a0a0a0"/><text x="326.4" y="87" font-family="Liberation Sans" font-size="12.3" font-weight="bold" fill="#000" stroke="#000" stroke-width="0.35">N</text><path d="M351.5 78.7 H357.8 M349 86.6 H355" stroke="#000" stroke-width="1.3" fill="none" /><path d="M355.6 78.7 L351.3 86.6" stroke="#000" stroke-width="1.9" fill="none" /><rect x="366" y="72" width="23" height="22" fill="#a0a0a0"/><text x="372" y="87" font-family="Liberation Sans" font-size="12.3" font-weight="bold" fill="#000" stroke="#000" stroke-width="0.3">S</text><path d="M372 88.8 H381" stroke="#000" stroke-width="1.2" fill="none" /><rect x="391" y="72" width="1" height="22" fill="#a0a0a0"/><rect x="394" y="72" width="23" height="22" fill="#a0a0a0"/><path d="M398 78.5 H412" stroke="#000" stroke-width="1.15" fill="none" /><path d="M398 80.5 H408" stroke="#000" stroke-width="1.15" fill="none" /><path d="M398 82.5 H412" stroke="#000" stroke-width="1.15" fill="none" /><path d="M398 84.5 H408" stroke="#000" stroke-width="1.15" fill="none" /><path d="M398 86.5 H412" stroke="#000" stroke-width="1.15" fill="none" /><path d="M398 88.5 H408" stroke="#000" stroke-width="1.15" fill="none" /><path d="M421 78.5 H435" stroke="#000" stroke-width="1.15" fill="none" /><path d="M423 80.5 H433" stroke="#000" stroke-width="1.15" fill="none" /><path d="M421 82.5 H435" stroke="#000" stroke-width="1.15" fill="none" /><path d="M423 84.5 H433" stroke="#000" stroke-width="1.15" fill="none" /><path d="M421 86.5 H435" stroke="#000" stroke-width="1.15" fill="none" /><path d="M423 88.5 H433" stroke="#000" stroke-width="1.15" fill="none" /><path d="M444 78.5 H458" stroke="#000" stroke-width="1.15" fill="none" /><path d="M448 80.5 H458" stroke="#000" stroke-width="1.15" fill="none" /><path d="M444 82.5 H458" stroke="#000" stroke-width="1.15" fill="none" /><path d="M448 84.5 H458" stroke="#000" stroke-width="1.15" fill="none" /><path d="M444 86.5 H458" stroke="#000" stroke-width="1.15" fill="none" /><path d="M448 88.5 H458" stroke="#000" stroke-width="1.15" fill="none" /><path d="M467 78.5 H481" stroke="#000" stroke-width="1.15" fill="none" /><path d="M467 80.5 H481" stroke="#000" stroke-width="1.15" fill="none" /><path d="M467 82.5 H481" stroke="#000" stroke-width="1.15" fill="none" /><path d="M467 84.5 H481" stroke="#000" stroke-width="1.15" fill="none" /><path d="M467 86.5 H481" stroke="#000" stroke-width="1.15" fill="none" /><path d="M467 88.5 H481" stroke="#000" stroke-width="1.15" fill="none" /><path d="M491.5 75 V80" stroke="#800080" stroke-width="1.3" fill="none" /><path d="M489 77.5 H494 L491.5 81 Z" fill="#800080"/><path d="M491.5 91 V86" stroke="#800080" stroke-width="1.3" fill="none" /><path d="M489 88.5 H494 L491.5 85 Z" fill="#800080"/><path d="M497 76.5 H502" stroke="#000" stroke-width="1.15" fill="none" /><path d="M495 78.5 H504" stroke="#000" stroke-width="1.15" fill="none" /><path d="M497 81.5 H502" stroke="#000" stroke-width="1.15" fill="none" /><path d="M495 83.5 H504" stroke="#000" stroke-width="1.15" fill="none" /><path d="M497 86.5 H502" stroke="#000" stroke-width="1.15" fill="none" /><path d="M495 88.5 H504" stroke="#000" stroke-width="1.15" fill="none" /><path d="M510.6 81 H516.2 L513.4 84.2 Z" fill="#000"/><rect x="521" y="72" width="1" height="22" fill="#a0a0a0"/><rect x="528.3" y="77.2" width="3" height="3" fill="#000"/><path d="M533 78.6 H542" stroke="#000" stroke-width="1.1" fill="none" /><rect x="528.3" y="82.2" width="3" height="3" fill="#000"/><path d="M533 83.6 H542" stroke="#000" stroke-width="1.1" fill="none" /><rect x="528.3" y="87.2" width="3" height="3" fill="#000"/><path d="M533 88.6 H542" stroke="#000" stroke-width="1.1" fill="none" /><text x="550.5" y="81.2" font-family="Liberation Sans" font-size="5.5" font-weight="bold" font-style="normal" fill="#000">1</text><path d="M556 78.6 H565" stroke="#000" stroke-width="1.1" fill="none" /><text x="550.5" y="86.2" font-family="Liberation Sans" font-size="5.5" font-weight="bold" font-style="normal" fill="#000">2</text><path d="M556 83.6 H565" stroke="#000" stroke-width="1.1" fill="none" /><text x="550.5" y="91.2" font-family="Liberation Sans" font-size="5.5" font-weight="bold" font-style="normal" fill="#000">3</text><path d="M556 88.6 H565" stroke="#000" stroke-width="1.1" fill="none" /><rect x="572" y="72" width="1" height="22" fill="#a0a0a0"/><rect x="585" y="75" width="1.2" height="1.2" fill="#000"/><rect x="585" y="89" width="1.2" height="1.2" fill="#000"/><path d="M580 77.5 H584 M585 77.5 H594 M580 85.5 H584 M585 85.5 H594 M580 87.5 H584 M585 87.5 H587" stroke="#000" stroke-width="1.15" fill="none" /><path d="M585 80 H594 M585 83 H591" stroke="#000" stroke-width="2" fill="none" /><path d="M578 81.5 H581" stroke="#000" stroke-width="1.3" fill="none" /><path d="M580 79 L583.5 81.5 L580 84 Z" fill="#000"/><rect x="608" y="75" width="1.2" height="1.2" fill="#000"/><rect x="608" y="89" width="1.2" height="1.2" fill="#000"/><path d="M603 77.5 H607 M608 77.5 H617 M603 85.5 H607 M608 85.5 H617 M603 87.5 H607 M608 87.5 H610" stroke="#000" stroke-width="1.15" fill="none" /><path d="M608 80 H617 M608 83 H614" stroke="#000" stroke-width="2" fill="none" /><path d="M604 81.5 H607" stroke="#000" stroke-width="1.3" fill="none" /><path d="M604.5 79 L601 81.5 L604.5 84 Z" fill="#000"/><rect x="623" y="72" width="1" height="22" fill="#a0a0a0"/><path d="M629.3 77.6 H631.5 V81.5 H630.2 Q629.2 81.5 629.2 80.4 Q629.2 79.4 630.2 79.4 H631.5" stroke="#000" stroke-width="1.1" fill="none" /><path d="M633 75.8 V81.5 H634.6 Q635.8 81.5 635.8 80.2 V79.2 Q635.8 78 634.6 78 H633" stroke="#000" stroke-width="1.1" fill="none" /><path d="M637.2 83.6 L643.2 77.2 Q644 76.4 644.8 77.2 L645.4 77.8 Q646 78.6 645.2 79.4 L639.2 85.6" stroke="#000" stroke-width="1.2" fill="none" /><path d="M633.5 86.2 L636.5 82.8 L639.6 85.8 Z" fill="#000"/><rect x="628" y="87" width="17" height="4" fill="#000"/><rect x="629.2" y="88" width="14.6" height="2" fill="#ffff00"/><path d="M652 81.8 H657 L654.5 84.7 Z" fill="#6c6c7c"/><path d="M668.2 84 L671 77.3 L673.8 84 M669.2 81.3 H672.8" stroke="#000" stroke-width="1.6" fill="none" /><rect x="667" y="83.2" width="2.4" height="1.4" fill="#000"/><rect x="672.6" y="83.2" width="2.4" height="1.4" fill="#000"/><rect x="662" y="87" width="17" height="3.8" fill="#000"/><path d="M686 82.5 H691 L688.5 85.3 Z" fill="#6c6c7c"/><rect x="696" y="72" width="1" height="22" fill="#a0a0a0"/><path d="M703.0 86.5 L705.25 80.8 L707.5 86.5 M703.74 84.22 H706.76" stroke="#000" stroke-width="0.85" fill="none" /><path d="M702.2 86.3 H703.7 M706.8 86.3 H708.3" stroke="#000" stroke-width="1.1" fill="none" /><path d="M708.2 79.8 L710.4 81.8 L708.2 83.8 Z" fill="#000"/><path d="M712.0 86.5 L714.75 79.8 L717.5 86.5 M712.96 83.84 H716.54" stroke="#000" stroke-width="0.85" fill="none" /><path d="M711.2 86.3 H712.7 M716.8 86.3 H718.3" stroke="#000" stroke-width="1.1" fill="none" /><path d="M726.0 86.5 L728.75 79.8 L731.5 86.5 M726.96 83.84 H730.54" stroke="#000" stroke-width="0.85" fill="none" /><path d="M725.2 86.3 H726.7 M730.8 86.3 H732.3" stroke="#000" stroke-width="1.1" fill="none" /><path d="M733 79.8 L735.2 81.8 L733 83.8 Z" fill="#000"/><path d="M736.5 86.5 L738.75 80.8 L741.0 86.5 M737.24 84.22 H740.26" stroke="#000" stroke-width="0.85" fill="none" /><path d="M735.7 86.3 H737.2 M740.3 86.3 H741.8" stroke="#000" stroke-width="1.1" fill="none" /><rect x="747" y="72" width="1" height="22" fill="#a0a0a0"/><text x="753.6" y="87.3" font-family="Liberation Sans" font-size="8.5" font-weight="normal" font-style="normal" fill="#000">a</text><path d="M762.0 89 L764.75 81.8 L767.5 89 M762.96 86.15 H766.54" stroke="#000" stroke-width="0.85" fill="none" /><path d="M761.2 88.8 H762.7 M766.8 88.8 H768.3" stroke="#000" stroke-width="1.1" fill="none" /><path d="M756 80.5 Q756.5 77.5 759.5 77.5 Q762 77.5 763 78.5" stroke="#000" stroke-width="1" fill="none" /><path d="M762 77 H765.5 V80.5 Z" fill="#000"/><path d="M778.0 89 L780.75 81.8 L783.5 89 M778.96 86.15 H782.54" stroke="#000" stroke-width="0.85" fill="none" /><path d="M777.2 88.8 H778.7 M782.8 88.8 H784.3" stroke="#000" stroke-width="1.1" fill="none" /><text x="785.6" y="87.3" font-family="Liberation Sans" font-size="8.5" font-weight="normal" font-style="normal" fill="#000">a</text><path d="M779 80.5 Q779.5 77.5 782.5 77.5 Q785 77.5 786 78.5" stroke="#000" stroke-width="1" fill="none" /><path d="M785 77 H788.5 V80.5 Z" fill="#000"/><path d="M798.7 87 H804.3 L801.5 90 Z" fill="#000"/><path d="M6 100.7 H13 M9.5 100.7 V105.5 M8 105.5 H11" stroke="#000" stroke-width="1.3" fill="none" /><path d="M6.3 100 V102 M12.7 100 V102" stroke="#000" stroke-width="1" fill="none" /><path d="M13.5 112.5 Q11 110 11.5 107.5 L12.5 108 V104 Q13.5 103 14.5 104 V107 Q15.5 106 16.5 107 Q17.5 106.5 18.5 107.5 Q19.5 107.5 19.8 108.8 V110.5 Q19.5 112.5 17.5 112.5 Z" stroke="#000" stroke-width="1" fill="none" /><path d="M6.5 120.5 H18.5 V126.5 H6.5 Z" stroke="#000" stroke-width="1.2" fill="none" /><path d="M8.5 122.5 V124.5" stroke="#000" stroke-width="1.2" fill="none" /><path d="M13 128.5 H20 M16.5 128.5 V134 M15 134 H18.5" stroke="#000" stroke-width="1.3" fill="none" /><path d="M13.3 128 V130 M19.7 128 V130" stroke="#000" stroke-width="1" fill="none" /><path d="M5.5 146.5 L7.5 144.5 H12 M5.5 146.5 V155.5 H14.5 V148" stroke="#000" stroke-width="1.2" fill="none" /><rect x="7" y="145" width="1.3" height="1.3" fill="#000"/><path d="M12.5 143.5 H20.5 V147.5 H12.5 Z" stroke="#000" stroke-width="1.2" fill="none" /><rect x="7" y="150" width="6" height="2.8" fill="#000"/><path d="M16.5 152.5 L19 150 M17.5 150 H19.2 V151.7" stroke="#000" stroke-width="1.1" fill="none" /><path d="M8.5 163.5 H15.5 V171 M6.5 165.5 L8.5 163.5 M6.5 165.5 V175.5 H11" stroke="#a8a8a8" stroke-width="1.1" fill="none" /><path d="M8 168.5 H14 M8 170.5 H14 M8 172.5 H10 M11 166.5 H14" stroke="#a8a8a8" stroke-width="1" fill="none" /><path d="M11.5 172.5 H19.5 V177.5 H11.5 Z" stroke="#a8a8a8" stroke-width="1.1" fill="none" /><path d="M7.5 186.5 H18.5 V199.5 H7.5 Z" stroke="#000" stroke-width="1.3" fill="none" /><rect x="9" y="189" width="1.4" height="1.4" fill="#000"/><path d="M11.5 189.7 H17" stroke="#000" stroke-width="1.2" fill="none" /><rect x="9" y="192" width="1.4" height="1.4" fill="#000"/><path d="M11.5 192.7 H17" stroke="#000" stroke-width="1.2" fill="none" /><rect x="9" y="195" width="1.4" height="1.4" fill="#000"/><path d="M11.5 195.7 H17" stroke="#000" stroke-width="1.2" fill="none" /><path d="M9.5 208 H18 V222 H7 V210.5 Z" fill="#a3a3a3"/><rect x="9" y="210" width="1" height="1" fill="#e0e0e0"/><path d="M7.5 229.5 H13.5 M5.5 231.5 L7.5 229.5 M5.5 231.5 V240.5 H7" stroke="#a8a8a8" stroke-width="1.1" fill="none" /><path d="M10.5 231.5 H16.5 M8.5 233.5 L10.5 231.5 M8.5 233.5 V242.5 H10" stroke="#a8a8a8" stroke-width="1.1" fill="none" /><path d="M13 233 H20 V245 H11 V235 Z" fill="#a3a3a3"/><rect x="12.5" y="234.5" width="1" height="1" fill="#d9d9d9"/><path d="M7.5 253.5 H18.5 V261.5 H14 L11.5 264.5 L9 261.5 H7.5 Z M9.5 256.5 H16.5 M9.5 258.5 H16.5" stroke="#a8a8a8" stroke-width="1.1" fill="none" /><path d="M7.5 273.5 H13.5 V277 M5.5 275.5 L7.5 273.5 M5.5 275.5 V284.5 H9.5" stroke="#a8a8a8" stroke-width="1.1" fill="none" /><path d="M7 277.5 H11 M7 279.5 H12 M7 281.5 H10 M10 275.5 H12" stroke="#a8a8a8" stroke-width="1" fill="none" /><path d="M11 288.5 L17.5 282 L19.8 284.3 L13.3 290.8 L11 290.8 Z M16 283.5 L18.3 285.8" stroke="#a8a8a8" stroke-width="1.1" fill="none" /><path d="M8 307.5 H5.5 V295.5 H20.5 V307.5 H18" stroke="#000" stroke-width="1.3" fill="none" /><path d="M5.5 300.5 H20.5" stroke="#000" stroke-width="1.2" fill="none" /><rect x="8" y="297" width="2" height="2.5" fill="#000"/><rect x="11" y="297" width="8" height="2.5" fill="#000"/><rect x="9" y="302" width="8" height="9" fill="#000"/><rect x="10.2" y="303" width="5.6" height="2" fill="#e8e8e8"/><rect x="10.2" y="306" width="5.6" height="1.7" fill="#e8e8e8"/><rect x="10.2" y="308.7" width="5.6" height="1.3" fill="#e8e8e8"/><rect x="2" y="316" width="23" height="1" fill="#a0a0a0"/><path d="M6.5 323.5 H15.5 L18.8 326.5 L15.5 329.5 H6.5 Z" stroke="#000" stroke-width="1.2" fill="none" /><path d="M11 329.5 V337" stroke="#000" stroke-width="2" fill="none" /><path d="M5 346 L8 343 V349 Z" fill="#000"/></svg>
<div class="a" style="left:498px;top:482px;width:309px;height:112px;background:linear-gradient(135deg,#d4d4d4,#e6e6e6);border-right:1px solid #acacac;border-bottom:1px solid #acacac;box-shadow:1px 1px 6px 1px rgba(0,0,0,0.2)"></div>
<div class="a" style="left:496px;top:478px;width:303px;height:108px;background:#d9d9d9;border:1px solid #757575"></div>
<div class="a" style="left:497px;top:482px;width:301px;height:27px;background:#bfcddc"></div>
<div class="t" style="left:500px;top:491px;letter-spacing:-0.3px">Cabeçalho e Rodapé</div>
<div class="a" style="left:497px;top:512px;width:301px;height:19px;background:#fff"></div>
<div class="t" style="left:500px;top:514px;letter-spacing:-0.25px">Cabeçalho -&nbsp; Todas as páginas</div>
<div class="a" style="left:785px;top:513px;width:11px;height:16px;background:#d4d4d4"></div>
<svg style="left:0;top:0" width="1279" height="985"><path d="M787.5 519 H793 L790.25 522 Z" fill="#000"/></svg>
<div class="a" style="left:497px;top:532px;width:301px;height:1px;background:#a0a0a0"></div>
<div class="a" style="left:497px;top:560px;width:301px;height:1px;background:#a0a0a0"></div>
<div class="t" style="left:503px;top:541px;letter-spacing:-0.25px">Cabeçalho</div>
<div class="t" style="left:580px;top:541px;letter-spacing:-0.25px">Rodapé</div>
<div class="t" style="left:501px;top:568px">Fechar</div>
<svg style="left:0;top:0" width="1279" height="985"><path d="M562.7 545.2 H568.2 L565.45 548.3 Z M624.8 545.2 H630.3 L627.55 548.3 Z" fill="#000"/><rect x="638" y="536" width="1" height="22" fill="#a0a0a0"/><rect x="689" y="536" width="1" height="22" fill="#a0a0a0"/><rect x="740" y="536" width="1" height="22" fill="#a0a0a0"/><path d="M647 539.5 H654.5 V544.5 M644.5 542 L647 539.5 M644.5 542 V552.5 H649.7" stroke="#000" stroke-width="1.2" fill="none"/><rect x="646" y="541" width="1.5" height="1.5" fill="#000"/><path d="M653 546 L652.3 553.8 M656 546 L655.3 553.8 M651.5 548.5 H658.5 M651 551.3 H658" stroke="#000" stroke-width="1.2" fill="none"/><path d="M670 539.5 H677.5 V547.5 M667.5 542 L670 539.5 M667.5 542 V552.5 H672.7" stroke="#000" stroke-width="1.2" fill="none"/><rect x="669" y="541" width="1.5" height="1.5" fill="#000"/><path d="M675.5 550.5 V555 M678 550.5 L677.3 555 M681.5 550.5 V555 M674.5 551 L675.5 550.5 M680.5 551 L681.5 550.5" stroke="#000" stroke-width="1.1" fill="none"/><path d="M695.7 541.7 H710.3 V554.3 H695.7 Z M695.7 544.5 H710.3" stroke="#000" stroke-width="1.3" fill="none"/><rect x="698.2" y="539" width="2.5" height="3.5" fill="#000"/><rect x="705.2" y="539" width="2.5" height="3.5" fill="#000"/><path d="M719.7 540.7 H732.3 V553.3 H719.7 Z" stroke="#000" stroke-width="1.3" fill="none"/><path d="M726.8 544 V546.8 L723 550.6" stroke="#000" stroke-width="1.1" fill="none"/><path d="M748.5 544.3 H746.6 V539.6 H761.6 V544.3 H759.5 M748.5 549.3 H746.6 V554.4 H761.6 V549.3 H759.5" stroke="#000" stroke-width="1.2" fill="none"/><path d="M750.4 542 V550" stroke="#000" stroke-width="1.3"/><path d="M747.8 549 H753 L750.4 552.6 Z M755 545 H760.2 L757.6 541.4 Z" fill="#000"/><path d="M757.6 544 V551.5" stroke="#000" stroke-width="1.3"/><path d="M752 544.3 H753.5 M754.5 544.3 H756 M752 549.3 H753.5 M754.5 549.3 H756" stroke="#000" stroke-width="1"/></svg>
<div class="a" style="left:304px;top:186px;width:694px;height:126px;border:5px solid #e27d1b;border-radius:9px"></div>
<div class="a" style="left:492px;top:481px;width:310px;height:32px;border:5px solid #e27d1b;border-radius:8px"></div>
<div class="a" style="left:661px;top:308px;width:27px;height:29px;background:#e27d1b;border-radius:0 0 3px 3px"></div>
<div class="t" style="left:670px;top:314.5px;color:#fff;font-size:18.5px">2</div>
<div class="a" style="left:763px;top:456px;width:27px;height:28px;background:#e27d1b;border-radius:3px 3px 0 0"></div>
<svg style="left:0;top:0" width="1279" height="985"><path d="M777.3 463.2 V475.5 M772.9 475.3 H781 M773.2 466.8 L777.3 463.5" stroke="#fff" stroke-width="1.7" fill="none"/></svg>
<svg style="left:0;top:0" width="1279" height="985"><path d="M641.4 482 C650 455 658 425 657 397 C656 370 650 345 645.5 320" stroke="#e27d1b" stroke-width="4" fill="none"/><path d="M644.3 312.5 L638.8 320.8 L652.2 318.2 Z" fill="#e27d1b" stroke="#e27d1b" stroke-width="2" stroke-linejoin="round"/></svg>
<div class="a" style="left:0;top:0;width:1px;height:985px;background:#000"></div>
<div class="a" style="left:1278px;top:0;width:1px;height:985px;background:#000"></div>
<div class="a" style="left:0;top:984px;width:1279px;height:1px;background:#000"></div>
</body></html>
